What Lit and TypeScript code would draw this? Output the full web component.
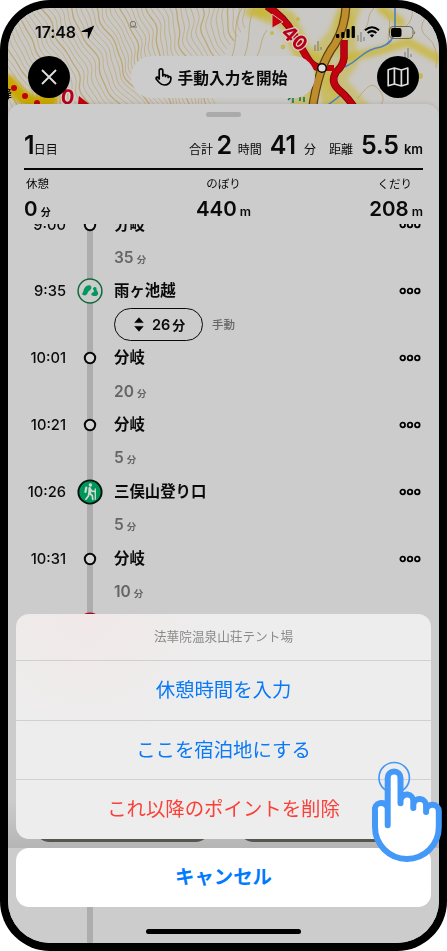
import { LitElement, html, css, svg } from "lit";
import { customElement, property } from "lit/decorators.js";

type Kind = "dot" | "pond" | "trail" | "camp";
interface Stop { time: string; name: string; kind: Kind; minutes: string; manual?: boolean; }

const STOPS: Stop[] = [
  { time: "9:00", name: "分岐", kind: "dot", minutes: "35" },
  { time: "9:35", name: "雨ヶ池越", kind: "pond", minutes: "26", manual: true },
  { time: "10:01", name: "分岐", kind: "dot", minutes: "20" },
  { time: "10:21", name: "分岐", kind: "dot", minutes: "5" },
  { time: "10:26", name: "三俣山登り口", kind: "trail", minutes: "5" },
  { time: "10:31", name: "分岐", kind: "dot", minutes: "10" },
  { time: "10:41", name: "法華院温泉山荘テント場", kind: "camp", minutes: "" },
];

/** Contour lines of the slope in the western half of the map. */
const contours = () => {
  const out = [];
  for (let i = -14; i < 44; i++) {
    let d = "";
    for (let y = 0; y <= 100; y += 4) {
      const lean = i < 14 ? y * 0.62 : y * (0.62 - (i - 14) * 0.02);
      const x = i * 5.6 + lean + Math.sin(y / 9 + i * 0.22) * 3.2 + Math.sin(y / 4.3 + i * 0.9) * 1.1 + Math.sin(y / 24 + i * 0.12) * 5;
      d += (y ? "L" : "M") + x.toFixed(1) + " " + y;
    }
    out.push(svg`<path d=${d} stroke-width=${i % 5 === 0 ? 1.3 : 0.7} />`);
  }
  return out;
};

@customElement("trail-map")
class TrailMap extends LitElement {
  static styles = css`
    :host { display: block; }
    svg { display: block; }
    .label { font: 700 20px "Inter", sans-serif; fill: #b5001c; stroke: #d8cfc6; stroke-width: 2.4; paint-order: stroke; }
    .place { font: 700 11px "Noto Sans CJK JP", sans-serif; fill: #111; }
  `;
  render() {
    return html`<svg width="431" height="112" viewBox="8 8 431 112">
      <defs><filter id="soft" x="-20%" y="-20%" width="140%" height="140%"><feGaussianBlur stdDeviation="2.2"/></filter>
      <clipPath id="west"><path d="M8 8H262L226 50L212 120H8Z"/></clipPath></defs>
      <rect x="8" y="8" width="431" height="112" fill="#cac8c4"/>
      <g clip-path="url(#west)"><g transform="translate(8 8)" fill="none" stroke="#b99a55" stroke-opacity=".72">${contours()}</g></g>
      <g fill="none" stroke="#b9a070" stroke-width=".8">
        <path d="M242 8C231 25 240 35 231 60M254 8C246 25 252 44 242 61M267 30C259 40 263 50 254 60M288 60L292 112M374 8C365 17 372 22 363 31M385 12C396 22 383 36 391 46M357 99C367 88 371 79 380 91S376 109 370 112M425 18Q417 30 428 38T436 68M412 8Q414 20 405 27"/>
      </g>
      <g fill="none" stroke="#c8b632" stroke-linecap="round" filter="url(#soft)">
        <path d="M263 11L287 20L305 58L324 70L334 112" stroke-width="19" opacity=".65"/>
        <path d="M351 5L338 37L308 72L303 112" stroke-width="22" opacity=".55"/>
        <path d="M345 20L348 62L334 80L362 112" stroke-width="20" opacity=".5"/>
        <path d="M348 58L385 49L408 42L439 59" stroke-width="9" opacity=".75"/>
        <path d="M8 82L21 96L36 104L51 99" stroke-width="14" stroke="#c7a800"/>
        <path d="M250 12H267M382 9L400 22" stroke-width="10" opacity=".75"/>
      </g>
      <g fill="#c4b33b" opacity=".8"><circle cx="283" cy="22" r="2.5"/><circle cx="298" cy="19" r="2"/><circle cx="272" cy="33" r="2"/><circle cx="283" cy="47" r="2.4"/><circle cx="390" cy="31" r="2"/><circle cx="420" cy="76" r="3"/><circle cx="405" cy="70" r="2"/></g>
      <path d="M395 8V31Q393 43 381 47Q369 49 361 56T345 67M325 107Q338 98 344 92" fill="none" stroke="#4f7fc2" stroke-width="1.6"/>
      <path d="M267 6Q284 17 293 33T308 59T324 68M344 40V58Q343 66 336 72Q330 82 339 90Q349 98 357 112" fill="none" stroke="#710713" stroke-width="7.5"/>
      <path d="M267 6Q284 17 293 33T308 59T324 68H334M344 40V58Q343 66 336 72Q330 82 339 90Q349 98 357 112" fill="none" stroke="#c3000f" stroke-width="6"/>
      <path d="M346 6Q345 27 335 44Q318 66 312 112" fill="none" stroke="#5d3d15" stroke-width="9"/>
      <path d="M346 6Q345 27 335 44Q318 66 312 112" fill="none" stroke="#bd8e2b" stroke-width="6.6"/>
      <circle cx="322" cy="68" r="4.3" fill="#ddd" stroke="#000" stroke-width="1.5"/>
      <path d="M272 14L283 22L272 28Z" fill="#c3000f" stroke="#d8b7a5"/>
      <text class="label" transform="translate(280 34) rotate(43)">40</text>
      <g fill="#c3000f"><circle cx="14" cy="88" r="3"/><circle cx="25" cy="96" r="3"/><circle cx="37" cy="103" r="3"/><path d="M79 96L89 104H78Z"/></g>
      <text class="label" x="60" y="103" transform="rotate(8 60 103)" font-size="18">0</text>
      <text class="place" x="1" y="98">峰</text>
      <g fill="none" stroke="#777" stroke-width="1"><circle cx="133" cy="24" r="2.7"/><path d="M130 27H137M315 45V51M318 41V51M321 47V50M358 35V41M361 32V42M364 37V41M405 52V58M408 48V58M411 54V57"/></g>
      <path d="M288 100L291 97M293 98V103M300 96V101M304 97V102" stroke="#00735a" stroke-width="1.5"/>
    </svg>`;
  }
}

@customElement("stop-mark")
class StopMark extends LitElement {
  @property() kind: Kind = "dot";
  static styles = css`:host { display: block; width: 26px; height: 26px; } svg { display: block; }`;
  private art() {
    switch (this.kind) {
      case "pond": return svg`<circle cx="13" cy="13" r="11.9" fill="#ccc" stroke="#12693c" stroke-width="1.5"/>
        <path d="M6 17.1C4.6 16.4 5.2 14.6 6.2 13.9C6.9 10.5 8.5 7.6 11.7 7.3C14.2 7 15.2 9.5 13.7 11.5C12.5 13 11.4 12.8 10.6 15C9.9 17.1 8.2 18 6 17.1Z" fill="#00985b"/>
        <path d="M17.1 9.2C18.6 8.7 19.8 9.8 19.5 11.2C19.3 12.5 21.3 13.6 21.2 15.4C21.1 17.7 18.5 18.4 16.2 17.9C13.8 17.5 13.8 15.4 15.8 14.6C17.4 14 17.2 12.7 16.3 11.6C15.6 10.7 16 9.6 17.1 9.2Z" fill="#00985b"/>`;
      case "trail": return svg`<circle cx="13" cy="13" r="11.6" fill="#00965a" stroke="#08140e" stroke-width="1.9"/>
        <g fill="none" stroke="#d2d9d4" stroke-width="1.7" stroke-linecap="round" stroke-linejoin="round">
        <circle cx="13.4" cy="5.9" r=".9" fill="#d2d9d4"/><path d="M12.4 9L12 14L15.2 16.5L15.8 20.3M12 14L11.4 17L8.9 20.2M13 9.5L15 12.2L18.2 12.6" /><path d="M12.8 9.2L13.1 14" stroke-width="2.3"/><path d="M9.3 8.6L8.4 13" stroke-width="2.2"/><path d="M18.3 10V20.3" stroke-width="1.3"/></g>`;
      case "camp": return svg`<circle cx="13" cy="13" r="11.6" fill="#c00024" stroke="#a80a25" stroke-width="1.9"/>`;
      default: return svg`<circle cx="13" cy="13" r="5.2" fill="#d4d4d4" stroke="#080808" stroke-width="2"/>`;
    }
  }
  render() { return html`<svg width="26" height="26" viewBox="0 0 26 26">${this.art()}</svg>`; }
}

@customElement("app-root")
class AppRoot extends LitElement {
  static styles = css`
    :host { display: block; width: 447px; height: 951px; background: #fff; font-family: "Inter", "Noto Sans CJK JP", sans-serif; color: #0a0a0a; }
    * { box-sizing: border-box; }
    svg { display: block; flex: none; }
    .phone { position: relative; width: 447px; height: 951px; padding: 8px; background: #000; border-radius: 50px; }
    .screen { position: relative; width: 431px; height: 935px; border-radius: 42px; overflow: hidden; background: #ccc; display: flex; flex-direction: column; }
    .map { position: absolute; left: 0; top: 0; }
    .status { position: relative; height: 48px; padding: 0 23px 0 27px; display: flex; align-items: center; justify-content: space-between; }
    .clock { display: flex; align-items: center; gap: 5px; font-weight: 600; font-size: 16px; letter-spacing: -.1px; }
    .system { display: flex; align-items: center; gap: 9px; }
    .tools { position: relative; height: 42px; padding: 0 20px 0 20px; display: flex; justify-content: space-between; align-items: center; }
    .round { width: 42px; height: 42px; border-radius: 50%; background: #000; display: grid; place-items: center; }
    .start { width: 184px; height: 42px; margin-left: -2px; border-radius: 21px; background: #ccc; display: flex; align-items: center; justify-content: center; gap: 6px; font-weight: 600; font-size: 15.7px; }
    .start svg { margin-left: -3px; }
    .panel { position: relative; margin-top: 6px; flex: 1; background: #ccc; border-radius: 13px 13px 0 0; display: flex; flex-direction: column; box-shadow: 0 0 5px #0002; }
    .grip { width: 35px; height: 5px; border-radius: 3px; background: #aaa; margin: 8px auto 0; }
    .head { padding: 0 16px; height: 107px; }
    .total { height: 53px; padding-top: 11px; border-bottom: 2.5px solid #080808; display: flex; justify-content: space-between; align-items: baseline; line-height: 34px; font-size: 12px; }
    .total b { font-size: 25px; font-weight: 600; letter-spacing: -.2px; }
    .sums { display: flex; align-items: baseline; }
    .sums span { white-space: pre; }
    .km { font-size: 13px; font-weight: 600; }
    .stats { display: flex; justify-content: space-between; }
    .stat { text-align: center; width: 56px; }
    .stat.first { text-align: left; }
    .stat.last { text-align: right; }
    .cap { font-size: 11.5px; line-height: 16px; padding-top: 6px; }
    .first .cap { padding-left: 2px; }
    .last .cap { padding-right: 11px; }
    .val { line-height: 26px; margin-top: 4px; font-size: 12.5px; font-weight: 600; white-space: nowrap; }
    .val b { font-size: 20.5px; font-weight: 600; }
    .val i { font-style: normal; font-size: 10px; }
    .list { position: relative; flex: 1; overflow: hidden; }
    .rail { position: absolute; left: 79px; top: 0; bottom: 0; width: 6px; background: #adadad; }
    .rows { position: relative; margin-top: -16px; }
    .stop { height: 33.4px; display: grid; grid-template-columns: 58px 24px 300px 1fr; align-items: center; }
    .time { text-align: right; font-size: 14.7px; font-weight: 500; }
    .mark { margin-left: 11px; }
    .name { margin-left: 24px; font-size: 15.4px; font-weight: 600; line-height: 24px; }
    .more { justify-self: start; margin-left: 9px; }
    .leg { height: 33.4px; padding-left: 106px; display: flex; align-items: center; color: #666; font-weight: 600; gap: 3px; font-size: 15.5px; line-height: 24px; }
    .leg small { font-size: 9.5px; padding-top: 4px; }
    .pill { width: 89px; height: 33px; border: 1.3px solid #0a0a0a; border-radius: 17px; color: #0a0a0a; display: flex; align-items: center; padding-left: 19px; font-size: 14.5px; }
    .pill svg { margin-right: 8px; }
    .pill small { font-size: 13px; padding: 0 0 0 2px; }
    .note { font-size: 11.5px; margin-left: 6px; font-weight: 500; }
    .footer { position: absolute; left: 0; right: 0; top: 720px; height: 120px; padding: 80px 24px 0 25px; display: flex; gap: 25px; background: linear-gradient(#ccc 60%, #b5b5b5); }
    .footer span { flex: 1; height: 34px; border-radius: 17px; background: #535750; }
    .actions { position: absolute; left: 8px; right: 8px; top: 606px; display: flex; flex-direction: column; gap: 9px; text-align: center; font-size: 19.4px; color: #0879f8; }
    .group { height: 225px; border-radius: 13px; overflow: hidden; background: radial-gradient(circle at 70px 0, #f1e8e8, #ededed 130px); }
    .title { height: 46px; line-height: 46px; font-size: 12.65px; color: #8a8a8a; }
    .action { height: 59.7px; line-height: 58px; border-top: 1px solid #d0d0d0; }
    .danger { color: #fb4039; }
    .cancel { height: 59px; line-height: 58px; border-radius: 13px; background: #fff; color: #007aff; font-weight: 600; }
    .home { position: absolute; left: 138px; top: 921px; width: 155px; height: 5px; border-radius: 3px; background: #000; }
    .tap { position: absolute; left: 368px; top: 758px; }
  `;

  private dots() {
    return html`<svg class="more" width="22" height="8" viewBox="0 0 22 8" fill="#ddd" stroke="#000" stroke-width="1.8"><circle cx="3.7" cy="4" r="2.3"/><circle cx="11" cy="4" r="2.3"/><circle cx="18.3" cy="4" r="2.3"/></svg>`;
  }
  private leg(s: Stop) {
    if (!s.minutes) return "";
    return s.manual
      ? html`<div class="leg"><div class="pill"><svg width="10" height="15" viewBox="0 0 10 15"><path d="M5 .7L9.2 5.6H.8ZM5 14.3L.8 9.4H9.2Z" stroke="#000" stroke-width=".6" stroke-linejoin="round"/></svg>${s.minutes}<small>分</small></div><span class="note">手動</span></div>`
      : html`<div class="leg">${s.minutes}<small>分</small></div>`;
  }

  render() {
    return html`<div class="phone">
      <div class="screen">
        <trail-map class="map"></trail-map>
        <div class="status">
          <div class="clock">17:48<svg width="14" height="14" viewBox="0 0 14 14"><path d="M13.3.5L7.7 13.1Q7.1 13.9 6.8 12.9V7H1Q0 6.7.9 6.1Z"/></svg></div>
          <div class="system">
            <svg width="19" height="12" viewBox="0 0 19 12"><rect y="8" width="3.3" height="4" rx="1"/><rect x="5.2" y="6" width="3.3" height="6" rx="1"/><rect x="10.4" y="3" width="3.3" height="9" rx="1"/><rect x="15.6" width="3.3" height="12" rx="1"/></svg>
            <svg width="16" height="12" viewBox="0 0 16 12" fill="none" stroke="#000" stroke-width="2"><path d="M1 4.2Q8-1.8 15 4.2" /><path d="M3.6 7Q8 3.2 12.4 7"/><path d="M8 11.5L5.8 9.2Q8 7.5 10.2 9.2Z" fill="#000" stroke="none"/></svg>
            <svg width="27" height="13" viewBox="0 0 27 13"><rect x=".5" y=".5" width="23.5" height="12" rx="3.7" fill="none" stroke="#6b6650"/><rect x="2" y="2" width="10.5" height="9" rx="2"/><path d="M25.2 4.5Q27 6.5 25.2 8.5Z" fill="#6b6650"/></svg>
          </div>
        </div>
        <div class="tools">
          <div class="round"><svg width="16" height="16" viewBox="0 0 16 16" stroke="#ddd" stroke-width="1.9"><path d="M1 1L15 15M15 1L1 15"/></svg></div>
          <div class="start"><svg width="17" height="18" viewBox="0 0 17 18" fill="none" stroke="#000" stroke-width="1.7" stroke-linecap="round" stroke-linejoin="round"><path d="M4.2 11V2.7a1.8 1.8 0 0 1 3.6 0V8M7.8 7.3q1.8-1.3 2.7 0V8.4M10.5 7.8q1.8-1.1 2.7.3V9.4M13.2 8.9q2.7-1 2.7 1.3V11A6.2 6.2 0 0 1 9.5 17Q6.5 17 4.2 14.5L1.2 11Q.7 8.9 2.4 9.2L4.2 11"/></svg>手動入力を開始</div>
          <div class="round"><svg width="22" height="20" viewBox="0 0 22 20" fill="none" stroke="#ddd" stroke-width="1.7" stroke-linejoin="round"><path d="M1.2 2.8L7.4 1L14.4 3L20.8 1V17L14.4 19L7.4 17L1.2 18.8ZM7.4 1V17M14.4 3V19"/></svg></div>
        </div>
        <div class="panel">
          <div class="grip"></div>
          <div class="head">
            <div class="total"><div><b>1</b> <span style="margin-left:-4px">日目</span></div>
              <div class="sums"><span>合計 </span><b>2</b><span style="margin-left:6px">時間</span><b style="margin-left:8px">41</b><span style="margin-left:8px">分</span><span style="margin-left:13px">距離</span><b style="margin-left:8px">5.5</b><span class="km" style="margin-left:5px">km</span></div></div>
            <div class="stats">
              <div class="stat first"><div class="cap">休憩</div><div class="val"><b>0</b> <i>分</i></div></div>
              <div class="stat"><div class="cap">のぼり</div><div class="val"><b>440</b> m</div></div>
              <div class="stat last"><div class="cap">くだり</div><div class="val"><b>208</b> m</div></div>
            </div>
          </div>
          <div class="list"><div class="rail"></div><div class="rows">
            ${STOPS.map(s => html`<div class="stop"><span class="time">${s.time}</span><stop-mark class="mark" kind=${s.kind}></stop-mark><span class="name">${s.name}</span>${this.dots()}</div>${this.leg(s)}`)}
          </div></div>
        </div>
        <div class="footer"><span></span><span></span></div>
        <div class="actions">
          <div class="group"><div class="title">法華院温泉山荘テント場</div><div class="action">休憩時間を入力</div><div class="action">ここを宿泊地にする</div><div class="action danger">これ以降のポイントを削除</div></div>
          <div class="cancel">キャンセル</div>
        </div>
        <div class="home"></div>
      </div>
      <svg class="tap" width="78" height="106" viewBox="368 758 78 106" stroke="#4498f7"><circle cx="394.2" cy="777.7" r="15.2" fill="none" stroke-width="1.7"/>
        <path d="M387.7 825.3V778a6.4 6.4 0 0 1 12.8 0V803.3V800.5a6.4 6.4 0 0 1 12.8 1V808V805a6.4 6.4 0 0 1 12.8 1V812V810a6.4 6.4 0 0 1 12.7 1V827a31.8 31.8 0 0 1-63.8 0V811a6.4 6.4 0 0 1 12.7-3" fill="#fff" stroke-width="6" stroke-linecap="round" stroke-linejoin="round"/></svg>
    </div>`;
  }
}
